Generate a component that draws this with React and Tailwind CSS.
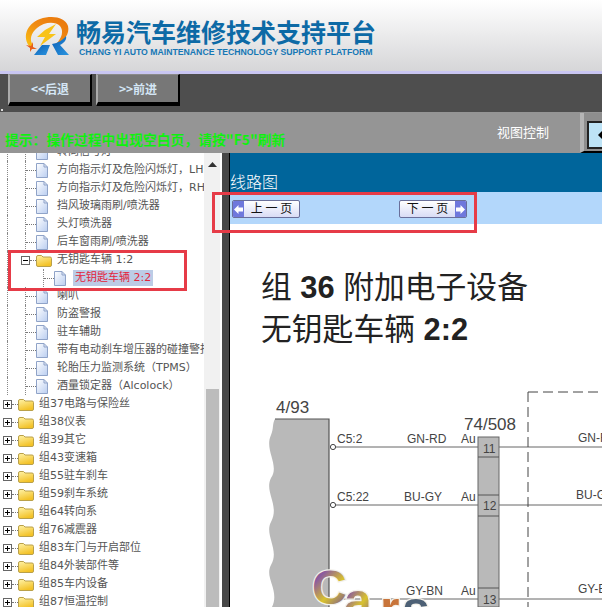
import React from "react";

const CJK = "font-['DejaVu_Sans','Noto_Sans_CJK_SC',sans-serif]";

function Logo() {
  return (
    <svg width="60" height="50" viewBox="0 0 60 50" className="shrink-0">
      <defs>
        <linearGradient id="ring" x1="0" y1="1" x2="1" y2="0">
          <stop offset="0" stopColor="#f9c313" />
          <stop offset="0.5" stopColor="#f08a12" />
          <stop offset="1" stopColor="#e8750c" />
        </linearGradient>
        <linearGradient id="rblue" x1="0" y1="0" x2="1" y2="1">
          <stop offset="0" stopColor="#0d5fb5" />
          <stop offset="1" stopColor="#2a95e0" />
        </linearGradient>
      </defs>
      <path d="M12 37 C4 28 8 14 22 9 C34 5 47 7 50 16 C52 24 46 31 38 34 C44 28 46 21 42 16 C37 11 26 12 19 18 C13 23 11 30 15 35 Z" fill="url(#ring)" />
      <path d="M8 35 L13 36 L15 32 L15 37 L19 39 L14 39 L12 42 L12 38 Z" fill="#e8601c" />
      <path d="M38 14 L31 24 L38 24 L22 36 L27 27 L19 27 L27 20 Z" fill="#f8c318" />
      <path d="M24 35 L32 35 L28 45 L16 45 Z" fill="url(#rblue)" />
      <path d="M34 34 C40 33 45 30 48 26 C49 30 46 33 42 35 L51 45 L40 45 Z" fill="url(#rblue)" />
    </svg>
  );
}

function Doc() {
  return (
    <svg width="12" height="15" viewBox="0 0 12 15" className="shrink-0">
      <defs>
        <linearGradient id="docg" x1="0" y1="0" x2="1" y2="1">
          <stop offset="0" stopColor="#ffffff" />
          <stop offset="1" stopColor="#b9cdf0" />
        </linearGradient>
      </defs>
      <path d="M0.5 0.5 H8 L11.5 4 V14.5 H0.5 Z" fill="url(#docg)" stroke="#8fa3c8" />
      <path d="M8 0.5 V4 H11.5" fill="none" stroke="#8fa3c8" />
    </svg>
  );
}

function Folder() {
  return (
    <svg width="16" height="13" viewBox="0 0 16 13" className="shrink-0">
      <defs>
        <linearGradient id="fold" x1="0" y1="0" x2="0.4" y2="1">
          <stop offset="0" stopColor="#fff3a8" />
          <stop offset="1" stopColor="#f3c227" />
        </linearGradient>
      </defs>
      <path d="M0.5 3 Q0.5 1.5 2 1.5 H5.5 L7 3 H14 Q15.5 3 15.5 4.5 V11 Q15.5 12.5 14 12.5 H2 Q0.5 12.5 0.5 11 Z" fill="url(#fold)" stroke="#b9a04a" />
    </svg>
  );
}

function Box({ open }) {
  return (
    <svg width="9" height="9" viewBox="0 0 9 9" className="shrink-0">
      <rect x="0.5" y="0.5" width="8" height="8" fill="#fff" stroke="#666" />
      <path d={open ? "M2 4.5 H7" : "M2 4.5 H7 M4.5 2 V7"} stroke="#000" />
    </svg>
  );
}

const Dots = ({ w }) => <span className="shrink-0 border-t border-dotted border-[#777] h-0" style={{ width: w }} />;
const Guide = ({ w }) => <span className="shrink-0 self-stretch border-l border-dotted border-[#888]" style={{ width: w }} />;

function DocRow({ text }) {
  return (
    <div className="flex h-[18px] items-center whitespace-nowrap overflow-hidden">
      <span className="w-[7px] shrink-0" />
      <Guide w={18} />
      <span className="shrink-0 self-stretch border-l border-dotted border-[#888] flex items-center w-[11px]">
        <Dots w={10} />
      </span>
      <Doc />
      <span className="ml-[9px] text-[#555]">{text}</span>
    </div>
  );
}

function OpenRow({ text }) {
  return (
    <div className="flex h-[18px] items-center whitespace-nowrap">
      <span className="w-[7px] shrink-0" />
      <span className="shrink-0 self-stretch border-l border-dotted border-[#888] w-[14px]" />
      <Box open />
      <Dots w={6} />
      <Folder />
      <span className="ml-[5px] text-[#555]">{text}</span>
    </div>
  );
}

function ChildRow({ text }) {
  return (
    <div className="flex h-[18px] items-center whitespace-nowrap">
      <span className="w-[7px] shrink-0" />
      <Guide w={18} />
      <span className="w-[18px] shrink-0" />
      <span className="shrink-0 self-stretch flex items-center w-[11px] border-l border-dotted border-[#888]">
        <Dots w={10} />
      </span>
      <Doc />
      <span className="ml-[7px] bg-[#bccce6] text-[#e3243c] px-[2px] h-[16px] leading-[16px]">{text}</span>
    </div>
  );
}

function FolderRow({ text }) {
  return (
    <div className="flex h-[18px] items-center whitespace-nowrap pl-[3px]">
      <Box />
      <Dots w={6} />
      <Folder />
      <span className="ml-[5px] text-[#555]">{text}</span>
    </div>
  );
}

function Tree() {
  const top = ["转向信号灯", "方向指示灯及危险闪烁灯，LHD", "方向指示灯及危险闪烁灯，RHD", "挡风玻璃雨刷/喷洗器", "头灯喷洗器", "后车窗雨刷/喷洗器"];
  const mid = ["喇叭", "防盗警报", "驻车辅助", "带有电动刹车增压器的碰撞警报", "轮胎压力监测系统（TPMS）", "酒量锁定器（Alcolock）"];
  const groups = ["组37电路与保险丝", "组38仪表", "组39其它", "组43变速箱", "组55驻车刹车", "组59刹车系统", "组64转向系", "组76减震器", "组83车门与开启部位", "组84外装部件等", "组85车内设备", "组87恒温控制"];
  return (
    <div className={`w-[204px] shrink-0 overflow-hidden text-[11px] ${CJK}`}>
      <div className="-mt-[10px]">
        {top.map((t) => <DocRow key={t} text={t} />)}
        <OpenRow text="无钥匙车辆 1:2" />
        <ChildRow text="无钥匙车辆 2:2" />
        {mid.map((t) => <DocRow key={t} text={t} />)}
        {groups.map((t) => <FolderRow key={t} text={t} />)}
      </div>
    </div>
  );
}

function NavButton({ dir, children }) {
  const cap = (
    <span className="w-[11px] self-stretch bg-[#6f78dc] flex items-center justify-center">
      <svg width="9" height="9" viewBox="0 0 9 9">
        <path d={dir === "l" ? "M0 4.5 L4.5 0 V2.5 H9 V6.5 H4.5 V9 Z" : "M9 4.5 L4.5 0 V2.5 H0 V6.5 H4.5 V9 Z"} fill="#fff" />
      </svg>
    </span>
  );
  return (
    <div className="w-[68px] h-[18px] flex rounded-[2px] border border-[#6a6f9a] overflow-hidden bg-gradient-to-b from-white to-[#d9dcf5]">
      {dir === "l" && cap}
      <span className="flex-1 text-center text-[12px] leading-[14px] text-[#111] font-['Noto_Sans_CJK_SC',sans-serif] whitespace-pre">{children}</span>
      {dir === "r" && cap}
    </div>
  );
}

function Diagram() {
  const txt = { fontFamily: "Liberation Sans, sans-serif", fill: "#444" };
  return (
    <svg width="372" height="227" viewBox="0 0 372 227" className="block shrink-0" style={txt}>
      <defs>
        <linearGradient id="wm" x1="0" y1="0" x2="0.7" y2="1">
          <stop offset="0" stopColor="#a0703c" />
          <stop offset="0.3" stopColor="#8a5aa0" />
          <stop offset="0.65" stopColor="#d8c22e" />
          <stop offset="1" stopColor="#7d5a90" />
        </linearGradient>
      </defs>
      <path d="M45 39 H99 V227 H42 C50 210 34 198 41 185 C50 170 34 155 41 142 C50 125 34 112 41 98 C50 85 34 70 41 55 C44 48 42 44 45 39 Z" fill="#b9b9b9" />
      <path d="M45 39 H99 V227" fill="none" stroke="#555" strokeWidth="1.2" />
      <text x="46" y="33" fontSize="17">4/93</text>
      <text x="234" y="50" fontSize="17">74/508</text>

      <rect x="248" y="57" width="21" height="170" fill="#b9b9b9" stroke="#666" />
      <path d="M248 77 H269 M248 115 H269 M248 136 H269 M248 208 H269" stroke="#555" />
      <path d="M106 67 H248 M269 67 H372 M106 125 H248 M269 125 H372 M106 219 H248 M269 219 H372" stroke="#666" />
      <circle cx="103" cy="67" r="2.6" fill="#fff" stroke="#444" />
      <circle cx="103" cy="125" r="2.6" fill="#fff" stroke="#444" />
      <path d="M298 12 H372 M298 12 V227" fill="none" stroke="#444" strokeDasharray="10 5" />

      <g fontSize="12">
        <text x="107" y="63">C5:2</text>
        <text x="177" y="63">GN-RD</text>
        <text x="231" y="63">Au</text>
        <text x="253" y="73">11</text>
        <text x="348" y="62">GN-RD</text>
        <text x="107" y="121">C5:22</text>
        <text x="174" y="121">BU-GY</text>
        <text x="231" y="121">Au</text>
        <text x="253" y="130">12</text>
        <text x="346" y="119">BU-GY</text>
        <text x="176" y="215">GY-BN</text>
        <text x="231" y="215">Au</text>
        <text x="253" y="224">13</text>
        <text x="348" y="213">GY-BN</text>
      </g>

      <g fontFamily="Liberation Sans, sans-serif" fontWeight="bold" stroke="#f4f1ea" strokeWidth="2.5" paintOrder="stroke" fill="url(#wm)">
        <text x="82" y="224" fontSize="48">C</text>
        <text x="114" y="238" fontSize="50">a</text>
        <text x="150" y="246" fontSize="50" fill="#c8743a">r</text>
        <text x="172" y="246" fontSize="50" fill="#4d6075">s</text>
      </g>
    </svg>
  );
}

export default function App() {
  return (
    <div className="relative w-[602px] h-[607px] overflow-hidden bg-white flex flex-col font-['Noto_Sans_CJK_SC',sans-serif]">
      {/* header */}
      <header className="h-[74px] shrink-0 flex items-start pl-[18px] pt-[10px] bg-gradient-to-b from-white to-[#d6d6d8] border-b-[3px] border-[#c9c6f2]">
        <Logo />
        <div className="-ml-[2px] pt-[7px] flex flex-col">
          <span className="text-[25px] leading-[28px] font-bold text-[#0d6aa6] whitespace-nowrap">畅易汽车维修技术支持平台</span>
          <span className="ml-[3px] text-[8.7px] leading-[11px] mt-[2px] font-bold text-[#1577b5] whitespace-nowrap font-['Liberation_Sans',sans-serif]">CHANG YI AUTO MAINTENANCE TECHNOLOGY SUPPORT PLATFORM</span>
        </div>
      </header>

      {/* toolbar */}
      <div className="h-[38px] shrink-0 bg-[#4e4e4e] flex items-start pl-[8px] gap-[4px]">
        {["<<后退", ">>前进"].map((t) => (
          <button key={t} className="w-[84px] h-[32px] bg-[#777777] border-l-2 border-t border-l-[#ababab] border-t-[#8a8a8a] border-r-2 border-b-4 border-r-black border-b-black text-[12px] font-bold text-[#d4e6f5]">
            {t}
          </button>
        ))}
      </div>

      {/* status */}
      <div className="h-[41px] shrink-0 bg-[#959595] flex items-center justify-between pl-[5px]">
        <span className="mt-[14px] text-[13.8px] font-bold text-[#10f010] whitespace-nowrap">提示：操作过程中出现空白页，请按"F5"刷新</span>
        <div className="flex items-center h-full">
          <span className="text-[13px] text-white mr-[31px] -mt-[2px] whitespace-nowrap">视图控制</span>
          <div className="w-[22px] h-[40px] bg-[#8e8e8e] border-l-4 border-l-[#b5b5b5] border-b-2 border-b-black pl-[3px] pt-[8px]">
            <div className="w-full h-[28px] bg-[#bde3f6] border-[#222] border-l-2 border-y-2 flex items-center">
              <svg width="10" height="12" viewBox="0 0 10 12" className="ml-[9px] shrink-0"><path d="M0 6 L6 0 V12 Z" fill="#000" /></svg>
            </div>
          </div>
        </div>
      </div>

      {/* body */}
      <div className="flex flex-1 min-h-0">
        <Tree />
        <div className="w-[16px] shrink-0 bg-[#f1f1f1] flex flex-col items-center relative">
          <svg width="9" height="5" viewBox="0 0 9 5" className="mt-[9px] shrink-0"><path d="M0 5 L4.5 0 L9 5 Z" fill="#333" /></svg>
          <div className="w-[13px] bg-[#bcbcbc] mt-[222px] flex-1" />
        </div>
        <div className="w-[2px] shrink-0 bg-white" />
        <div className="w-[7px] shrink-0 bg-[#484848]" />
        <div className="w-[1px] shrink-0 bg-black" />
        <main className="flex-1 min-w-0 flex flex-col overflow-hidden">
          <div className="h-[39px] shrink-0 bg-[#00659b] flex items-end pb-[1px]">
            <span className="text-[16px] leading-[20px] text-white font-light">线路图</span>
          </div>
          <div className="h-[32px] shrink-0 bg-[#b3d7fb] pt-[8px] pl-[2px]">
            <div className="w-[235px] flex justify-between">
              <NavButton dir="l">{"上 一 页"}</NavButton>
              <NavButton dir="r">{"下 一 页"}</NavButton>
            </div>
          </div>
          <div className="pl-[31px] pt-[43px] h-[156px] shrink-0 text-[#222] text-[30.8px] leading-[42px] font-['Liberation_Sans','Noto_Sans_CJK_SC',sans-serif] whitespace-nowrap">
            <div>组 <b>36</b> 附加电子设备</div>
            <div>无钥匙车辆 <b>2:2</b></div>
          </div>
          <Diagram />
        </main>
      </div>

      {/* annotations */}
      <div className="absolute left-[8px] top-[250px] w-[179px] h-[41px] border-[3px] border-[#e63b47] pointer-events-none" />
      <div className="absolute left-[212px] top-[192px] w-[265px] h-[41px] border-[3px] border-[#e63b47] pointer-events-none" />
      <div className="absolute left-[1px] top-[109px] w-[2px] h-[2px] bg-[#ddd]" />
    </div>
  );
}
